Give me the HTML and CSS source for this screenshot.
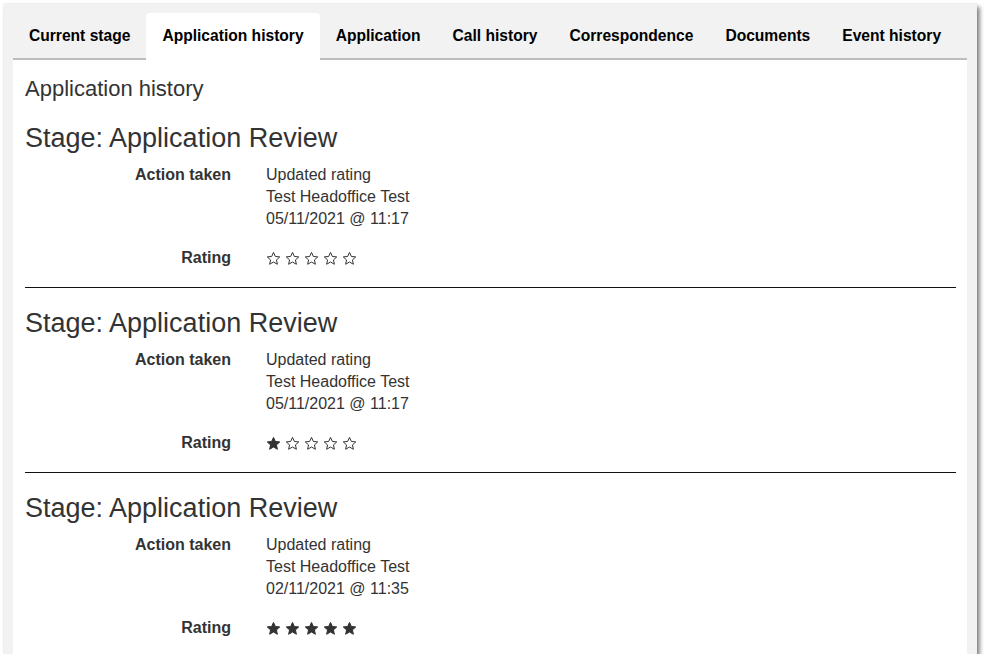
FILE: index.html
```html
<!DOCTYPE html>
<html lang="en">
<head>
  <meta charset="UTF-8">
  <title>Application history</title>
  <link rel="stylesheet" href="styles.css">
</head>
<body>
  <svg class="defs" width="0" height="0">
    <symbol id="star" viewBox="0 0 24 24">
      <path d="M12 2.2l2.95 6.5 7.05.75-5.3 4.8 1.5 6.95L12 17.6l-6.2 3.6 1.5-6.95-5.3-4.8 7.05-.75z"/>
    </symbol>
  </svg>

  <div class="window">
    <ul class="tabs">
      <li>Current stage</li>
      <li class="active">Application history</li>
      <li>Application</li>
      <li>Call history</li>
      <li>Correspondence</li>
      <li>Documents</li>
      <li>Event history</li>
    </ul>

    <div class="panel">
      <h2 class="panel-title">Application history</h2>

      <div class="stage">
        <h3>Stage: Application Review</h3>
        <dl class="details">
          <dt>Action taken</dt>
          <dd>Updated rating<br>Test Headoffice Test<br>05/11/2021 @ 11:17</dd>
          <dt>Rating</dt>
          <dd class="stars">
            <svg class="star"><use href="#star"/></svg>
            <svg class="star"><use href="#star"/></svg>
            <svg class="star"><use href="#star"/></svg>
            <svg class="star"><use href="#star"/></svg>
            <svg class="star"><use href="#star"/></svg>
          </dd>
        </dl>
      </div>
      <hr>

      <div class="stage">
        <h3>Stage: Application Review</h3>
        <dl class="details">
          <dt>Action taken</dt>
          <dd>Updated rating<br>Test Headoffice Test<br>05/11/2021 @ 11:17</dd>
          <dt>Rating</dt>
          <dd class="stars">
            <svg class="star on"><use href="#star"/></svg>
            <svg class="star"><use href="#star"/></svg>
            <svg class="star"><use href="#star"/></svg>
            <svg class="star"><use href="#star"/></svg>
            <svg class="star"><use href="#star"/></svg>
          </dd>
        </dl>
      </div>
      <hr>

      <div class="stage">
        <h3>Stage: Application Review</h3>
        <dl class="details">
          <dt>Action taken</dt>
          <dd>Updated rating<br>Test Headoffice Test<br>02/11/2021 @ 11:35</dd>
          <dt>Rating</dt>
          <dd class="stars">
            <svg class="star on"><use href="#star"/></svg>
            <svg class="star on"><use href="#star"/></svg>
            <svg class="star on"><use href="#star"/></svg>
            <svg class="star on"><use href="#star"/></svg>
            <svg class="star on"><use href="#star"/></svg>
          </dd>
        </dl>
      </div>
      <hr>
    </div>
  </div>
</body>
</html>
```

FILE: styles.css
```css
body { margin: 0; background: #fff; font-family: "Liberation Sans", Arial, sans-serif; color: #333; }
.defs { position: absolute; }

.window { margin: 4px 0 0 4px; width: 973px; height: 650px; box-sizing: border-box; padding: 9px 10px 0 9px; background: #f2f2f2; box-shadow: 0 0 2px rgba(0,0,0,0.15), 3px 3px 4px rgba(0,0,0,0.45); overflow: hidden; display: flex; flex-direction: column; }

.tabs { list-style: none; margin: 0; padding: 0; display: flex; border-bottom: 2px solid #bdbdbd; }
.tabs li { padding: 13px 16px 13px; font-size: 15.6px; line-height: 19px; font-weight: bold; color: #000; white-space: nowrap; }
.tabs li.active { background: #fff; border-radius: 4px 4px 0 0; margin-bottom: -2px; padding-bottom: 15px; }

.panel { flex: 1; background: #fff; padding: 16px 11px 0 12px; }
.panel-title { margin: 0 0 21px; font-size: 22px; line-height: 26px; font-weight: normal; }

.stage h3 { margin: 0; font-size: 27px; line-height: 30px; font-weight: normal; }
.details { display: grid; grid-template-columns: 206px 1fr; column-gap: 35px; row-gap: 17px; margin: 11px 0 18px; font-size: 16px; line-height: 22px; }
.details dt { font-weight: bold; text-align: right; }
.details dd { margin: 0; }

.stars { display: flex; align-items: center; gap: 4px; height: 22px; }
.star { width: 15px; height: 15px; fill: none; stroke: #333; stroke-width: 1.6; }
.star.on { fill: #333; }

hr { margin: 0 0 20px; border: 0; border-top: 1px solid #111; }
```
